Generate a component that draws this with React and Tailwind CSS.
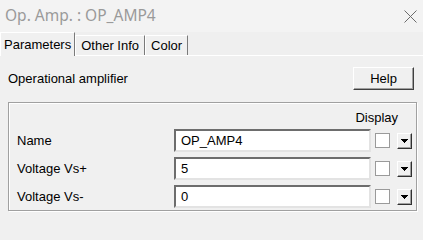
import React from "react";

const rows = [
  { label: "Name", value: "OP_AMP4" },
  { label: "Voltage Vs+", value: "5" },
  { label: "Voltage Vs-", value: "0" },
];

const CloseIcon = () => (
  <svg width="13" height="13" viewBox="0 0 13 13">
    <path d="M0.5 0.5 L12.5 12.5 M12.5 0.5 L0.5 12.5" stroke="#6b6b6b" strokeWidth="1" fill="none" />
  </svg>
);

// pixel-stepped arrow like the classic combo button
const DropButton = () => (
  <div className="w-[15px] h-[16px] bg-[#f0f0f0] border border-t-white border-l-white border-b-[#303030] border-r-[#303030] shadow-[inset_-1px_-1px_0_#a0a0a0] flex items-center justify-center">
    <svg width="7" height="4" viewBox="0 0 7 4" shapeRendering="crispEdges" className="block">
      <rect x="0" y="0" width="7" height="1" fill="#000" />
      <rect x="1" y="1" width="5" height="1" fill="#000" />
      <rect x="2" y="2" width="3" height="1" fill="#000" />
      <rect x="3" y="3" width="1" height="1" fill="#000" />
    </svg>
  </div>
);

const Tab = ({ label, active }) => (
  <div
    className={
      "flex items-center border-l border-t border-r border-l-white border-t-white border-r-[#7a7a7a] bg-[#f0f0f0] " +
      (active ? "h-[24px] px-[3px] -mb-[1px] z-10" : "h-[20px] px-[5px]")
    }
  >
    <span>{label}</span>
  </div>
);

export default function App() {
  return (
    <div className="w-[423px] h-[240px] bg-[#f0f0f0] flex flex-col text-[13px] text-black font-['Liberation_Sans',Arial,sans-serif] overflow-hidden">
      <div className="h-[32px] bg-[#f3f3f3] flex items-center justify-between pl-[5px] pr-[6px]">
        <span className="text-[15.5px] text-[#9a9a9a] font-['Noto_Sans',sans-serif]">Op. Amp. : OP_AMP4</span>
        <CloseIcon />
      </div>

      <div className="h-[24px] flex items-end border-b border-white bg-[#efefef]">
        <Tab label="Parameters" active />
        <Tab label="Other Info" />
        <Tab label="Color" />
      </div>

      <div className="flex-1 pl-[8px] pr-[6px]">
        <div className="flex items-center justify-between mt-[11px] pr-[3px] h-[23px]">
          <span>Operational amplifier</span>
          <button className="w-[61px] h-[23px] bg-[#f0f0f0] border border-t-white border-l-white border-b-[#404040] border-r-[#404040] shadow-[inset_-1px_-1px_0_#a0a0a0] flex items-center justify-center">
            Help
          </button>
        </div>

        <div className="mt-[12px] h-[109px] border border-[#a0a0a0] shadow-[inset_1px_1px_0_#ffffff,1px_1px_0_#ffffff] pt-[7px]">
          <div className="h-[14px] flex items-center justify-end pr-[18px] leading-none">Display</div>
          <div className="mt-[5px] flex flex-col gap-[5px] pl-[8px]">
            {rows.map((r) => (
              <div key={r.label} className="flex items-center h-[23px]">
                <span className="w-[157px]">{r.label}</span>
                <div className="w-[197px] h-[23px] bg-white border-2 border-t-[#6d6d6d] border-l-[#6d6d6d] border-b-[#e3e3e3] border-r-[#e3e3e3] flex items-center pl-[5px]">
                  {r.value}
                </div>
                <div className="ml-[4px] w-[15px] h-[15px] bg-white border border-[#9a9a9a]" />
                <div className="ml-[7px]">
                  <DropButton />
                </div>
              </div>
            ))}
          </div>
        </div>
      </div>
    </div>
  );
}
